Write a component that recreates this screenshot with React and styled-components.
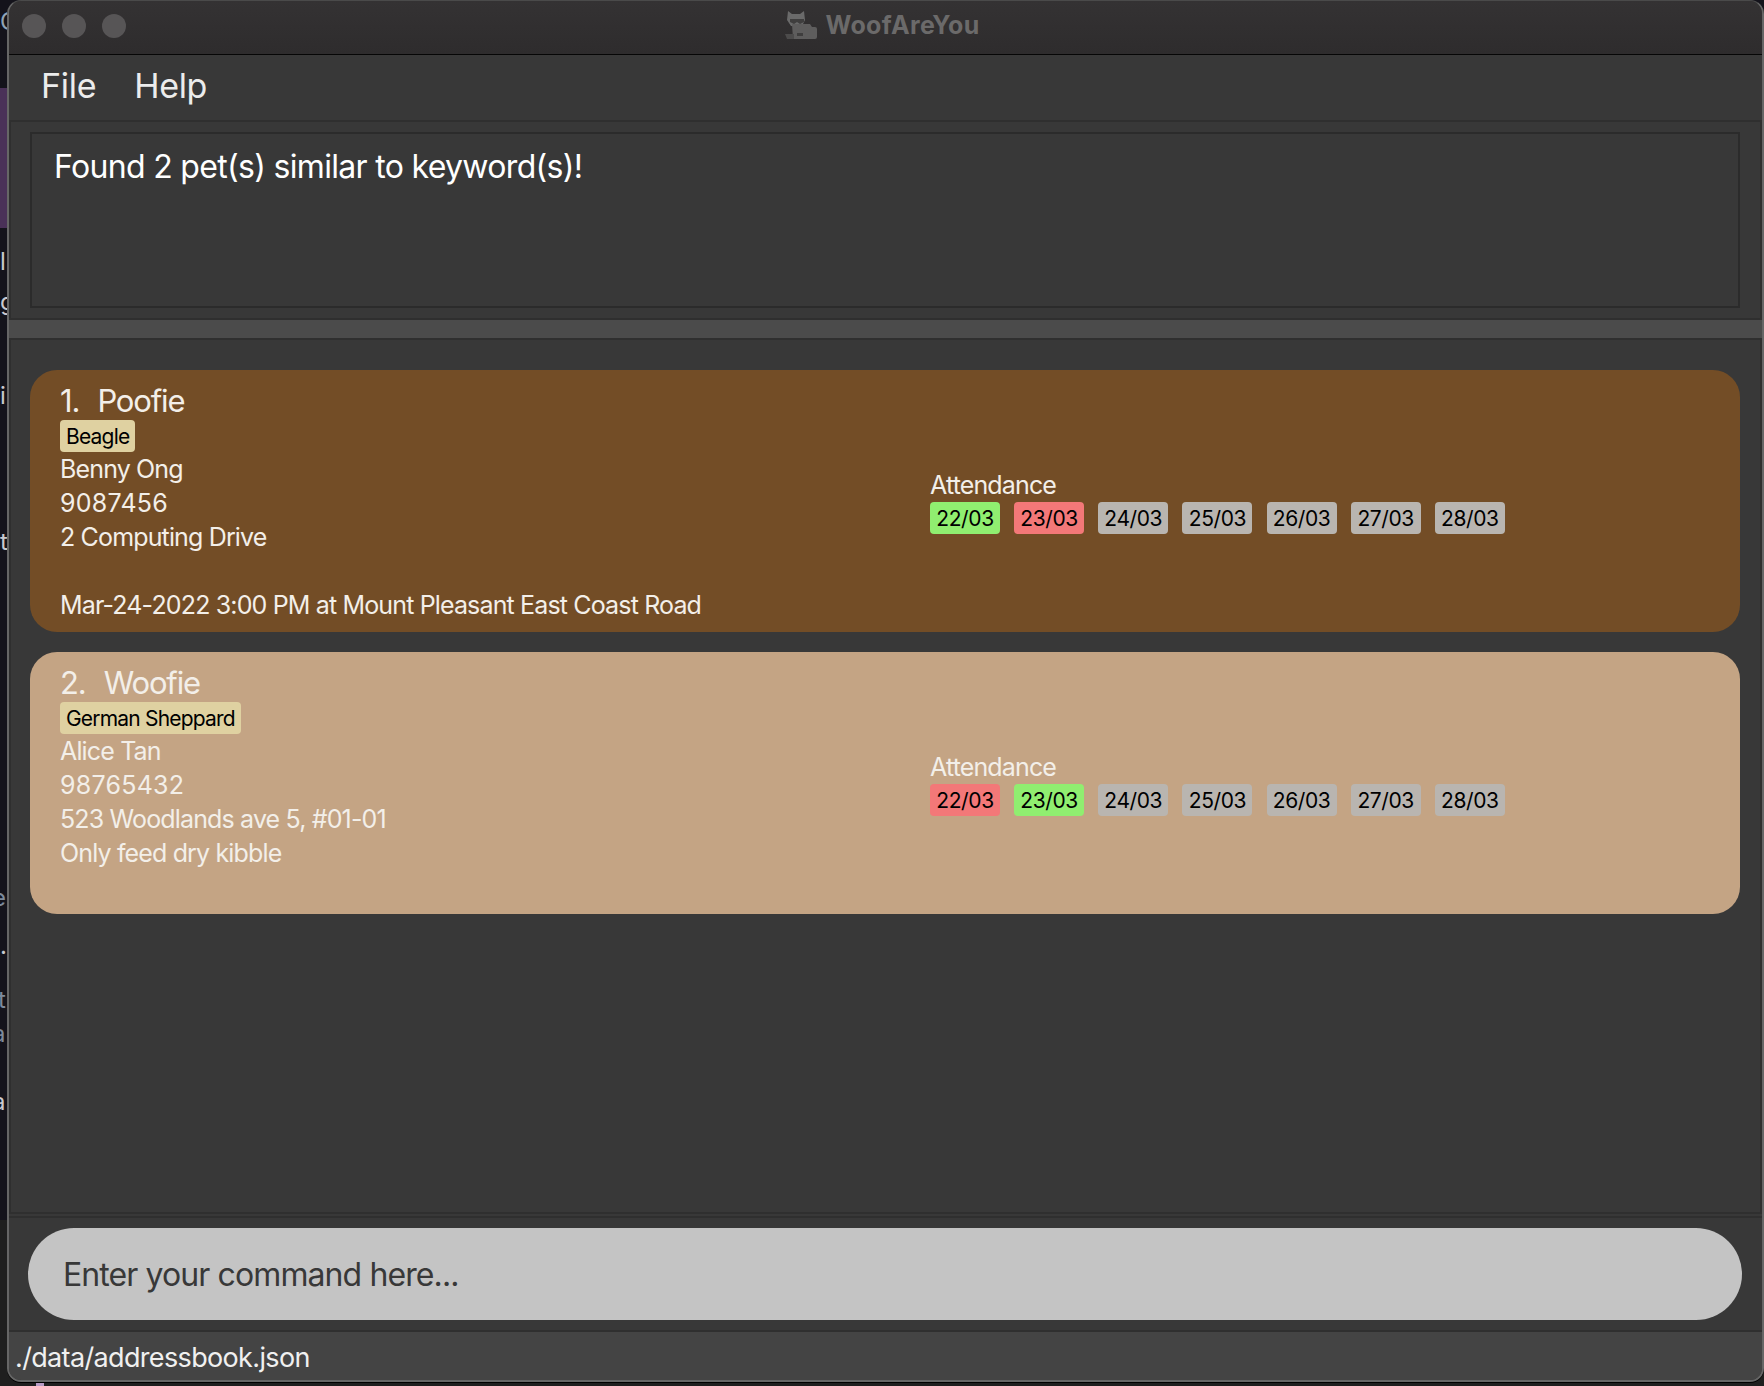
import React from "react";
import styled, { createGlobalStyle } from "styled-components";

const GlobalStyle = createGlobalStyle`
  html, body {
    margin: 0;
    padding: 0;
    background: #14131b;
  }
  * {
    box-sizing: border-box;
  }
`;

const Page = styled.div`
  position: relative;
  width: 1764px;
  height: 1386px;
  padding-left: 7px;
  font-family: Inter, "Liberation Sans", sans-serif;
  overflow: hidden;
  background: linear-gradient(#14131b 1220px, #1f1f1f 1220px);
`;

/* what shows of the desktop behind the window */
const DesktopBand = styled.div`
  position: absolute;
  left: 0;
  top: 88px;
  width: 7px;
  height: 140px;
  background: #4a3158;
`;

const DesktopMark = styled.div`
  position: absolute;
  left: 36px;
  top: 1383px;
  width: 8px;
  height: 3px;
  background: #b79bc4;
`;

const DesktopGlyph = styled.span`
  position: absolute;
  left: ${props => props.$left}px;
  top: ${props => props.$top}px;
  width: ${props => 7 - props.$left}px;
  overflow: hidden;
  color: ${props => props.$color || "#c9c9cf"};
  font-size: 24px;
  line-height: 28px;
`;

const Window = styled.div`
  position: relative;
  width: 1757px;
  height: 1382px;
  display: flex;
  flex-direction: column;
  border-radius: 14px;
  overflow: hidden;
  background: #383838;
  border: 2px solid #666666;
  border-top: 1px solid #4a4a4a;
  box-shadow: 0 1px 0 #000;
`;

const TitleBar = styled.div`
  flex: 0 0 54px;
  display: flex;
  align-items: center;
  justify-content: center;
  position: relative;
  padding-bottom: 6px;
  background: linear-gradient(#343233, #2e2c2d);
  border-bottom: 1px solid #060606;
`;

const Lights = styled.div`
  position: absolute;
  left: 13px;
  top: 13px;
  display: flex;
  gap: 16px;
`;

const Light = styled.span`
  width: 24px;
  height: 24px;
  border-radius: 50%;
  background: #575556;
`;

const AppTitle = styled.div`
  display: flex;
  align-items: center;
  gap: 8px;
  margin-left: -6px;
  color: #6b6a6a;
  font-size: 25px;
  font-weight: 700;
  letter-spacing: 0.3px;
`;

const MenuBar = styled.div`
  flex: 0 0 65px;
  display: flex;
  align-items: center;
  gap: 38px;
  padding: 0 0 4px 32px;
  color: #ececec;
  font-size: 34px;
  letter-spacing: -0.3px;
`;

const ResultPane = styled.div`
  flex: 0 0 200px;
  padding: 10px 20px 10px 19px;
  border: 2px solid #2f2f2f;
`;

const ResultBox = styled.div`
  height: 100%;
  padding: 14px 22px;
  border: 2px solid #2b2b2b;
  color: #ffffff;
  font-size: 32px;
  line-height: 38px;
  letter-spacing: -0.68px;
`;

const Splitter = styled.div`
  flex: 0 0 18px;
  background: #4b4b4b;
`;

const ListPane = styled.div`
  flex: 0 0 876px;
  display: flex;
  flex-direction: column;
  gap: 20px;
  padding: 30px 20px 0 19px;
  border: 2px solid #2f2f2f;
`;

const Card = styled.div`
  height: 262px;
  display: grid;
  grid-template-columns: 870px 1fr;
  padding: 12px 30px 0;
  border-radius: 27px;
  background: ${props => props.$bg};
  color: #f3efe9;
  font-size: 25px;
  line-height: 34px;
  letter-spacing: -0.85px;
`;

const Details = styled.div`
  display: flex;
  flex-direction: column;
`;

const PetName = styled.div`
  font-size: 31px;
  line-height: 38px;
  letter-spacing: -1.15px;
  word-spacing: 1.5px;
  white-space: pre;
`;

const BreedTag = styled.span`
  align-self: flex-start;
  height: 32px;
  padding: 0 6px;
  border-radius: 4px;
  background: #dfd1a1;
  color: #000;
  font-size: 21px;
  line-height: 33px;
  letter-spacing: -0.8px;
`;

const InfoLine = styled.div`
  height: 34px;
  letter-spacing: ${props => (props.$digits ? "0.25px" : "inherit")};
`;

const AttendanceBlock = styled.div`
  padding-top: 86px;
`;

const TagRow = styled.div`
  display: flex;
  gap: 14.15px;
`;

const DateTag = styled.span`
  width: 70px;
  height: 32px;
  border-radius: 4px;
  text-align: center;
  background: ${props => props.$bg};
  color: #000;
  font-size: 21px;
  line-height: 33px;
  letter-spacing: -0.4px;
`;

const CommandPane = styled.div`
  flex: 0 0 116px;
  margin-top: 2px;
  padding: 10px 20px 0 19px;
  border-top: 2px solid #2f2f2f;
  border-bottom: 2px solid #2f2f2f;
`;

const CommandBox = styled.div`
  height: 92px;
  display: flex;
  align-items: center;
  padding-left: 35px;
  border-radius: 46px;
  background: #c4c4c4;
  color: #383838;
  font-size: 32px;
  letter-spacing: -0.9px;
`;

const StatusBar = styled.div`
  flex: 1;
  display: flex;
  align-items: center;
  padding: 3px 0 0 6px;
  background: #444444;
  color: #f0f0f0;
  font-size: 27px;
  letter-spacing: -0.65px;
`;

const GREEN = "#90ee70";
const RED = "#f37878";
const GREY = "#b9b5b0";

const pets = [
  {
    name: "1.  Poofie",
    bg: "#734d26",
    breed: "Beagle",
    lines: ["Benny Ong", "9087456", "2 Computing Drive", "", "Mar-24-2022 3:00 PM at Mount Pleasant East Coast Road"],
    marks: [GREEN, RED]
  },
  {
    name: "2.  Woofie",
    bg: "#c4a484",
    breed: "German Sheppard",
    lines: ["Alice Tan", "98765432", "523 Woodlands ave 5, #01-01", "Only feed dry kibble"],
    marks: [RED, GREEN]
  }
];

const dates = ["22/03", "23/03", "24/03", "25/03", "26/03", "27/03", "28/03"];

const glyphs = [
  { ch: "C", left: 0, top: 8, color: "#8fa3b8" },
  { ch: "l", left: 0, top: 248 },
  { ch: "g", left: 0, top: 288 },
  { ch: "i", left: 0, top: 382 },
  { ch: "t", left: 0, top: 528 },
  { ch: "e", left: -8, top: 884, color: "#7d8a9c" },
  { ch: ".", left: 0, top: 932 },
  { ch: "t", left: -2, top: 986, color: "#7d8a9c" },
  { ch: "a", left: -8, top: 1020, color: "#7d8a9c" },
  { ch: "a", left: -8, top: 1088 }
];

const DogIcon = () => (
  <svg width="32" height="28" viewBox="0 0 32 28">
    <path d="M3 0l4 3h8l4-3 1 9-3 6H6L2 9z" fill="#6a6a6a" />
    <path d="M5 8h14v3l-4 2-3-2-3 2-4-2z" fill="#3f3e3e" />
    <path d="M7 13h18l2 3h3a2 2 0 0 1 2 2v8a2 2 0 0 1-2 2H8z" fill="#5e5d5d" />
    <path d="M0 23h9v5H2z" fill="#4c4b4b" />
    <rect x="12" y="22" width="6" height="3" fill="#3f3e3e" />
  </svg>
);

export default function App() {
  return (
    <Page>
      <GlobalStyle />
      <DesktopBand />
      <DesktopMark />
      {glyphs.map(g => (
        <DesktopGlyph key={g.top} $left={g.left} $top={g.top} $color={g.color}>
          {g.ch}
        </DesktopGlyph>
      ))}
      <Window>
        <TitleBar>
          <Lights>
            <Light />
            <Light />
            <Light />
          </Lights>
          <AppTitle>
            <DogIcon />
            WoofAreYou
          </AppTitle>
        </TitleBar>
        <MenuBar>
          <span>File</span>
          <span>Help</span>
        </MenuBar>
        <ResultPane>
          <ResultBox>Found 2 pet(s) similar to keyword(s)!</ResultBox>
        </ResultPane>
        <Splitter />
        <ListPane>
          {pets.map(pet => (
            <Card key={pet.name} $bg={pet.bg}>
              <Details>
                <PetName>{pet.name}</PetName>
                <BreedTag>{pet.breed}</BreedTag>
                {pet.lines.map((line, i) => (
                  <InfoLine key={i} $digits={/^\d+$/.test(line)}>
                    {line}
                  </InfoLine>
                ))}
              </Details>
              <AttendanceBlock>
                Attendance
                <TagRow>
                  {dates.map((d, i) => (
                    <DateTag key={d} $bg={pet.marks[i] || GREY}>
                      {d}
                    </DateTag>
                  ))}
                </TagRow>
              </AttendanceBlock>
            </Card>
          ))}
        </ListPane>
        <CommandPane>
          <CommandBox>Enter your command here...</CommandBox>
        </CommandPane>
        <StatusBar>./data/addressbook.json</StatusBar>
      </Window>
    </Page>
  );
}
